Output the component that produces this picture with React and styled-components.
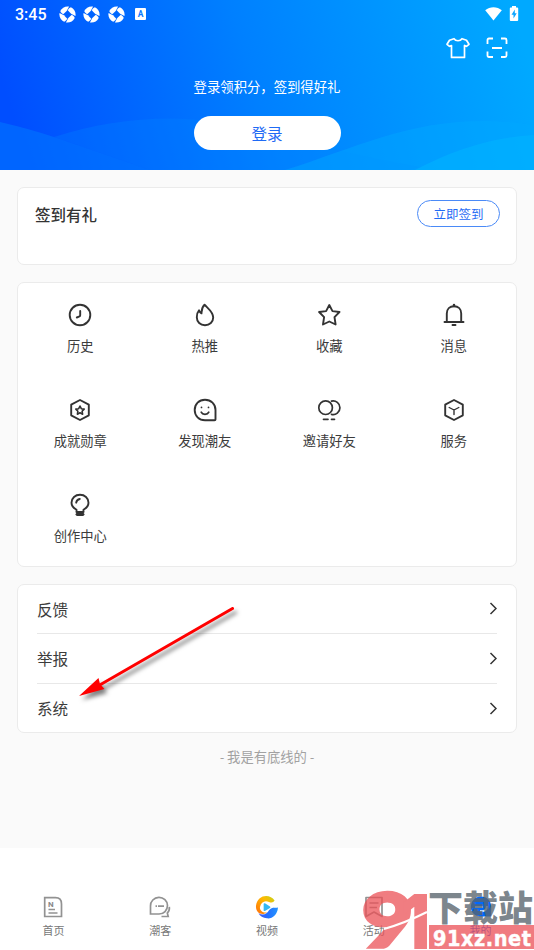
import React from 'react';
import styled, { createGlobalStyle } from 'styled-components';

const GlobalStyle = createGlobalStyle`
    * {
        box-sizing: border-box;
    }
    body {
        margin: 0;
        background: #fff;
        font-family: Roboto, "Noto Sans CJK SC", sans-serif;
        color: #3c3c3c;
    }
    svg {
        display: block;
        flex-shrink: 0;
    }
`;

const Page = styled.div`
    position: relative;
    width: 534px;
    height: 950px;
    display: flex;
    flex-direction: column;
    overflow: hidden;
`;

const Header = styled.header`
    position: relative;
    height: 170px;
    flex-shrink: 0;
    display: flex;
    flex-direction: column;
    align-items: center;
    background: linear-gradient(73deg, #004eff 5%, #0080ff 48%, #00a9ff 96%);
    color: #fff;
`;

const Waves = styled.svg`
    position: absolute;
    left: 0;
    bottom: 0;
`;

const StatusBar = styled.div`
    width: 100%;
    height: 28px;
    padding: 0 15px;
    display: flex;
    align-items: center;
    justify-content: space-between;
`;

const StatusGroup = styled.div`
    display: flex;
    align-items: center;
    gap: ${(props) => props.$gap}px;
`;

const Time = styled.span`
    font-size: 16px;
    line-height: 26px;
    padding-top: 2px;
    font-weight: 500;
    width: 36px;
    white-space: nowrap;
`;

const Actions = styled.div`
    width: 100%;
    height: 40px;
    padding: 0 26px 0 0;
    display: flex;
    align-items: center;
    justify-content: flex-end;
    gap: 16px;
`;

const Slogan = styled.div`
    margin-top: 10px;
    font-size: 13.35px;
    line-height: 20px;
    position: relative;
`;

const LoginButton = styled.button`
    position: relative;
    margin-top: 18px;
    padding: 0 0 1px;
    width: 147px;
    height: 34px;
    border: 0;
    border-radius: 17px;
    background: #fff;
    color: #1f6bf5;
    font-family: inherit;
    font-size: 15.6px;
`;

const Content = styled.main`
    height: 678px;
    flex-shrink: 0;
    padding: 17px 17px 0;
    display: flex;
    flex-direction: column;
    gap: 17px;
    background: #fafafa;
`;

const Card = styled.section`
    height: ${(props) => props.$height}px;
    flex-shrink: 0;
    background: #fff;
    border: 1px solid #ebebeb;
    border-radius: 7px;
`;

const SignCard = styled(Card)`
    padding: 12px 16px 0 17px;
    display: flex;
    align-items: flex-start;
    justify-content: space-between;
`;

const SignTitle = styled.h2`
    margin: 4px 0 0;
    font-size: 15.5px;
    line-height: 25px;
    font-weight: 500;
    color: #333;
`;

const SignButton = styled.button`
    width: 83px;
    height: 27px;
    padding: 0 0 1px;
    border: 1px solid #4a8af7;
    border-radius: 14px;
    background: #fff;
    color: #1f6bf5;
    font-family: inherit;
    font-size: 12.5px;
`;

const GridCard = styled(Card)`
    padding-top: 19px;
    display: grid;
    grid-template-columns: repeat(4, 1fr);
    grid-auto-rows: 95px;
`;

const GridItem = styled.div`
    display: flex;
    flex-direction: column;
    align-items: center;
    gap: 9px;
    font-size: 13.3px;
    line-height: 20px;
`;

const ListCard = styled(Card)`
    padding: 0 19px;
`;

const ListRow = styled.div`
    height: ${(props) => props.$height}px;
    padding-bottom: 1px;
    display: flex;
    align-items: center;
    justify-content: space-between;
    border-bottom: 1px solid #e8e8e8;
    font-size: 15.6px;

    &:last-child {
        padding-bottom: 0;
        border-bottom: 0;
    }
`;

const EndText = styled.div`
    margin-top: -2px;
    text-align: center;
    font-size: 13.3px;
    line-height: 20px;
    color: #a2a2a2;
`;

const TabBar = styled.nav`
    height: 102px;
    padding-top: 46px;
    display: grid;
    grid-template-columns: repeat(5, 1fr);
    background: #fff;
`;

const Tab = styled.div`
    display: flex;
    flex-direction: column;
    align-items: center;
    gap: 4px;
    font-size: 11px;
    line-height: 16px;
    color: ${(props) => (props.$active ? '#1f6bf5' : '#777')};
`;

const Arrow = styled.svg`
    position: absolute;
    left: 70px;
    top: 600px;
    filter: drop-shadow(3px 4px 2px rgba(0, 0, 0, 0.5));
`;

const Watermark = styled.div`
    position: absolute;
    left: 362px;
    top: 870px;
`;

const PinwheelIcon = () => (
    <svg width="17" height="17" viewBox="-8.5 -8.5 17 17">
        {[0, 90, 180, 270].map((angle) => (
            <path
                key={angle}
                transform={`rotate(${angle})`}
                d="M-7.200-3.400C-5.600-6.800-1.800-8.700 1.600-7.900L-.8-3.600-4.300-.2C-5.700-1-6.900-2.100-7.200-3.400Z"
                fill="#fff"
            />
        ))}
    </svg>
);

const KeyboardIcon = () => (
    <svg width="14" height="12" viewBox="-3 0 14 12">
        <rect width="11" height="12" rx="1" fill="#fff" />
        <text x="5.5" y="9" fontSize="8.5" fontWeight="700" textAnchor="middle" fill="#0879ff">A</text>
    </svg>
);

const WifiIcon = () => (
    <svg width="17" height="14" viewBox="0 0 17 14">
        <path d="M.2 3.2C5-.9 12-.9 16.8 3.2L8.5 13.6Z" fill="#fff" />
    </svg>
);

const BatteryIcon = () => (
    <svg width="10" height="17" viewBox="0 0 10 17">
        <path d="M3 0h4v1.500h1.200q1 0 1 1v11.400q0 1-1 1H1.800q-1 0-1-1V2.500q0-1 1-1H3Z" fill="#fff" />
        <path d="M5.800 3.500 2.500 8.800h2v3.800l3.200-5.300H5.800Z" fill="#0ba4ff" />
    </svg>
);

const ShirtIcon = () => (
    <svg width="24" height="22" viewBox="0 0 24 22" fill="none" stroke="#fff" strokeWidth="1.700" strokeLinejoin="round">
        <path d="M8 1.700C9.700 4.400 14.300 4.400 16 1.700L20.500 3.200 23 7.300 20.500 9.300 18.500 8.500V20.400H5.500V8.500L3.500 9.300 1 7.300 3.500 3.200Z" />
    </svg>
);

const ScanIcon = () => (
    <svg width="22" height="22" viewBox="0 0 22 22" fill="none" stroke="#fff" strokeWidth="1.800">
        <path d="M1.500 7V3Q1.500 1.500 3 1.500H7M15 1.500h4q1.500 0 1.500 1.500v4M20.500 14.500v4q0 1.500-1.500 1.500h-4M7 20H3q-1.500 0-1.500-1.500v-4M6 11h10" />
    </svg>
);

const GridIcon = ({ children }) => (
    <svg width="26" height="26" viewBox="-13 -13 26 26" fill="none" stroke="#333" strokeWidth="1.900" strokeLinejoin="round" strokeLinecap="round">
        {children}
    </svg>
);

const HEXAGON = 'M0-10 8.800-5.300V5.300L0 10-8.800 5.300V-5.300Z';

const gridItems = [
    {
        label: '历史',
        icon: <><circle r="10.300" /><path d="M.2-4V.2Q.2 1.300-1 1.700L-3.200 2.500" /></>
    },
    {
        label: '热推',
        icon: <path d="M-.5-10.300C-3.500-7.500-3.200-5-3.500-1.700-4.500-2.200-5.500-3.500-6-4.700-7.500-3-8.200 0-8.200 2.200-8.200 7-4.700 10.200 0 10.200S8.200 7 8.200 2.500C8.200-3 3.500-6-.5-10.300Z" />
    },
    {
        label: '收藏',
        icon: <path d="M.3-10 3.500-3.900 10.500-3 5.500 2.200 6.600 9.500 .3 6.500-6 9.500-4.900 2.200-9.900-3-2.900-3.900Z" />
    },
    {
        label: '消息',
        icon: <><path d="M-9.500 7H9.500M-7.200 6.500V-1.500C-7.200-6-4.200-8.800 0-8.800S7.200-6 7.200-1.500V6.500M-1.500 10h3" /><path d="M0-10v1" strokeWidth="2.500" /></>
    },
    {
        label: '成就勋章',
        icon: <><path d={HEXAGON} /><path d="M0-4 1.300-1.300 4.200-.9 2.100 1.200 2.600 4.200 0 2.800-2.600 4.200-2.100 1.200-4.200-.9-1.300-1.300Z" strokeWidth="1.600" /></>
    },
    {
        label: '发现潮友',
        icon: <><path d="M0 10.300C-6 10.300-10.300 6-10.300 0S-6-10.300 0-10.300 10.500-6 10.500 0V9.500Q10.500 10.300 9.500 10.300Z" /><path d="M-3.800 2.200C-2.500 5 2.500 5 3.800 2.200M-3.500-2.700v.2M3.500-2.700v.2" strokeWidth="1.700" /></>
    },
    {
        label: '邀请好友',
        icon: <><circle cx="-3.400" cy="-2.300" r="6.800" strokeWidth="1.700" /><path d="M2.500-8.900A6.800 6.800 0 1 1 2.500 4.300" strokeWidth="1.700" /><path d="M-5.500 9.300H-1M2.500 9.300H5.500" strokeWidth="1.700" /></>
    },
    {
        label: '服务',
        icon: <><path d={HEXAGON} /><path d="M-4.800-2.500 0 0 4.800-2.500M0 0V4.500" strokeWidth="1.400" /></>
    },
    {
        label: '创作中心',
        icon: <><path d="M-3.500 7V4.800C-6.500 3-8.500.5-8.500-2.300C-8.500-7-4.700-10.300 0-10.300S8.500-7 8.500-2.300C8.500.5 6.500 3 3.500 4.800V7ZM-3.800-2.300C-3.500-4.500-2.300-5.700-.2-6" /><path d="M-2.800 9.300H2.800" strokeWidth="3.200" /></>
    }
];

const rows = [
    { label: '反馈', height: 49 },
    { label: '举报', height: 50 },
    { label: '系统', height: 48 }
];

const ChevronIcon = () => (
    <svg width="8" height="13" viewBox="0 0 8 13" fill="none" stroke="#333" strokeWidth="1.500">
        <path d="M1.500 1 7 6.500 1.500 12" />
    </svg>
);

const TabIcon = ({ children }) => (
    <svg width="26" height="26" viewBox="-13 -13 26 26" fill="none" stroke="#929292" strokeWidth="1.700">
        {children}
    </svg>
);

const tabs = [
    {
        label: '首页',
        icon: <><path d="M-8.300-9.300H2.500Q8.500-9.300 8.500-3V9.500H-8.300Z" /><path d="M-4.500 2.500H2M-4.500 6H4.500" /><text x="-5" y="-.2" fontSize="8" fontWeight="700" stroke="none" fill="#888">N</text></>
    },
    {
        label: '潮客',
        icon: <><path d="M-9.500 7V-1A8.500 8.300 0 1 1-1 7ZM1.500 9.500H8.200L7.300 6C9.300 4 9.700 2.200 9.300-.2" /><path d="M-4.500-.8h1.500M-2-.8h6" /></>
    },
    {
        label: '视频',
        icon: (
            <g stroke="none">
                <defs>
                    <linearGradient id="warm" x1="1" y1="0" x2="0" y2="1">
                        <stop offset="0" stopColor="#bfd51c" />
                        <stop offset=".38" stopColor="#ffb900" />
                        <stop offset="1" stopColor="#ff6d0b" />
                    </linearGradient>
                    <linearGradient id="cool" x1="0" y1="0" x2="1" y2="0">
                        <stop offset="0" stopColor="#4056f6" />
                        <stop offset=".5" stopColor="#2471ff" />
                        <stop offset="1" stopColor="#2395ff" />
                    </linearGradient>
                </defs>
                <path d="M-8.500 6.200C-4 9 0 7 2 3.200C5 0 7 1 11 .5C10.500 8 5 12 0 11.300C-4 11-7 9-8.500 6.200Z" fill="url(#cool)" />
                <path d="M7.600-6.500C3-14-10-12.500-11 -1C-11.500 6-5 9 0 5.500C-5 6-7.500 3-7 0C-6-5-2-7 2-5Q6-3.500 7.600-6.500Z" fill="url(#warm)" />
                <path d="M-2.500-3 2.500.2-2.500 3.200Z" fill="#34b8f4" stroke="#34b8f4" strokeLinejoin="round" />
            </g>
        )
    },
    {
        label: '活动',
        icon: <><path d="M-8-9.500H8V9.500L0 5-8 9.500Z" strokeLinejoin="round" /><path d="M-4.500-4H4.500M-4.500 .5H3" /></>
    },
    {
        label: '我的',
        active: true,
        icon: <g stroke="none"><path d="M0-10.500C6-10.500 10.200-6 10.200 0V9.500H0C-6 9.500-10.200 5.500-10.200 0S-6-10.500 0-10.500Z" fill="#0068ff" /><path d="M-6 0H2M-1 4Q6 5 6-1" fill="none" stroke="#c9e4ff" strokeWidth="2" /></g>
    }
];

const App = () => {
    return (
        <Page>
            <GlobalStyle />
            <Header>
                <Waves width="534" height="52" viewBox="0 118 534 52">
                    <path d="M0 122Q30 129 54 137Q110 156 150 170H0Z" fill="#0078ff" fillOpacity=".55" />
                    <path d="M54 137C120 116 190 112 260 130Q340 153 420 167L410 170H150Q110 156 54 137Z" fill="#0085ff" fillOpacity=".3" />
                    <path d="M285 170C370 143 430 109 534 125V170Z" fill="#00a8ff" fillOpacity=".45" />
                    <path d="M415 170Q475 138 534 135V170Z" fill="#00b4ff" fillOpacity=".55" />
                </Waves>
                <StatusBar>
                    <StatusGroup $gap={7.5}>
                        <Time>3:45</Time>
                        <PinwheelIcon />
                        <PinwheelIcon />
                        <PinwheelIcon />
                        <KeyboardIcon />
                    </StatusGroup>
                    <StatusGroup $gap={7}>
                        <WifiIcon />
                        <BatteryIcon />
                    </StatusGroup>
                </StatusBar>
                <Actions>
                    <ShirtIcon />
                    <ScanIcon />
                </Actions>
                <Slogan>登录领积分，签到得好礼</Slogan>
                <LoginButton>登录</LoginButton>
            </Header>

            <Content>
                <SignCard $height={78}>
                    <SignTitle>签到有礼</SignTitle>
                    <SignButton>立即签到</SignButton>
                </SignCard>
                <GridCard $height={285}>
                    {gridItems.map(({ label, icon }) => (
                        <GridItem key={label}>
                            <GridIcon>{icon}</GridIcon>
                            {label}
                        </GridItem>
                    ))}
                </GridCard>
                <ListCard $height={149}>
                    {rows.map(({ label, height }) => (
                        <ListRow key={label} $height={height}>
                            {label}
                            <ChevronIcon />
                        </ListRow>
                    ))}
                </ListCard>
                <EndText>- 我是有底线的 -</EndText>
            </Content>

            <TabBar>
                {tabs.map(({ label, icon, active }) => (
                    <Tab key={label} $active={active}>
                        <TabIcon>{icon}</TabIcon>
                        {label}
                    </Tab>
                ))}
            </TabBar>

            <Arrow width="175" height="110" viewBox="70 600 175 110">
                <path d="M79 696 98.500 678 100 684 104.500 689Z" fill="#f00" />
                <path d="M232.500 608.500 98 686" stroke="#f00" strokeWidth="3" strokeLinecap="round" />
            </Arrow>

            <Watermark>
                <svg width="172" height="80" viewBox="362 870 172 80">
                    <g opacity=".74" fill="#ec5056" stroke="#ec5056" fontWeight="900">
                        <text x="362" y="947" fontFamily="Lato" fontSize="75" strokeWidth="3.500" textLength="51" lengthAdjust="spacingAndGlyphs">9</text>
                        <text x="401" y="949" fontFamily="Inter" fontSize="76" strokeWidth="0" textLength="29" lengthAdjust="spacingAndGlyphs">1</text>
                    </g>
                    <path d="M384 929Q405 923 427 912" fill="none" stroke="#fff" strokeWidth="2" />
                    <text x="428" y="921" fontFamily="Noto Sans CJK SC" fontWeight="900" fontSize="35" textLength="105" fill="#59656e" fillOpacity=".8">下载站</text>
                    <rect x="429" y="925" width="105" height="24" fill="#eb4d53" fillOpacity=".74" />
                    <text x="433" y="945.500" fontFamily="DejaVu Sans Condensed, DejaVu Sans" fontStretch="condensed" fontWeight="700" fontSize="21.500" textLength="98" fill="#fff" stroke="#fff" strokeWidth=".4">91xz.net</text>
                </svg>
            </Watermark>
        </Page>
    );
};

export default App;
